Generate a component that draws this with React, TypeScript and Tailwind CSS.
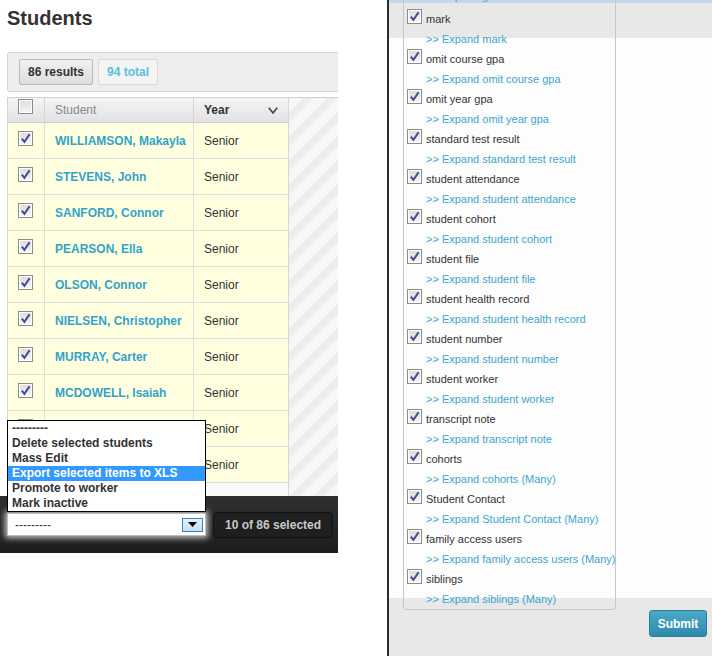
// Students list with bulk-action menu, next to an export field picker
const students = [
  'WILLIAMSON, Makayla',
  'STEVENS, John',
  'SANFORD, Connor',
  'PEARSON, Ella',
  'OLSON, Connor',
  'NIELSEN, Christopher',
  'MURRAY, Carter',
  'MCDOWELL, Isaiah',
  'LYONS, Lily',
  'KRAMER, Owen',
];

const actions = [
  '---------',
  'Delete selected students',
  'Mass Edit',
  'Export selected items to XLS',
  'Promote to worker',
  'Mark inactive',
];

const fields = [
  { label: 'mark', expand: '>> Expand mark' },
  { label: 'omit course gpa', expand: '>> Expand omit course gpa' },
  { label: 'omit year gpa', expand: '>> Expand omit year gpa' },
  { label: 'standard test result', expand: '>> Expand standard test result' },
  { label: 'student attendance', expand: '>> Expand student attendance' },
  { label: 'student cohort', expand: '>> Expand student cohort' },
  { label: 'student file', expand: '>> Expand student file' },
  { label: 'student health record', expand: '>> Expand student health record' },
  { label: 'student number', expand: '>> Expand student number' },
  { label: 'student worker', expand: '>> Expand student worker' },
  { label: 'transcript note', expand: '>> Expand transcript note' },
  { label: 'cohorts', expand: '>> Expand cohorts (Many)' },
  { label: 'Student Contact', expand: '>> Expand Student Contact (Many)' },
  { label: 'family access users', expand: '>> Expand family access users (Many)' },
  { label: 'siblings', expand: '>> Expand siblings (Many)' },
];

const Check = ({ checked }: { checked: boolean }) => (
  <span className="flex h-[15px] w-[15px] shrink-0 items-center justify-center border border-[#8c8c8c] bg-[linear-gradient(#dcdcdc,#f7f7f7)] shadow-[inset_0_0_0_1px_#ffffff]">
    {checked && (
      <svg width="11" height="11" viewBox="0 0 11 11">
        <path d="M1.8 5.6 L4.4 8.8 L9.6 1.2" fill="none" stroke="#3b4c8e" strokeWidth="2" />
      </svg>
    )}
  </span>
);

const StudentsPanel = () => (
  <div className="relative flex w-[338px] shrink-0 flex-col overflow-hidden">
    <h1 className="pl-[7px] pt-[7px] text-[20px] font-bold leading-[23px] text-[#333]">Students</h1>

    <div className="ml-[7px] mt-[22px] flex h-[40px] w-[360px] shrink-0 gap-[5px] rounded-[3px] border border-[#d4d4d4] bg-[#eeeeee] pl-[11px] pt-[6px]">
      <span className="flex h-[26px] items-center rounded-[2px] border border-[#b9b9b9] bg-[linear-gradient(#f0f0f0,#dedede)] px-[8px] font-bold text-[#333]">
        86 results
      </span>
      <span className="flex h-[26px] items-center rounded-[2px] border border-[#dadada] bg-[#f4f4f4] px-[8px] font-bold text-[#5bc0de]">
        94 total
      </span>
    </div>

    <div className="ml-[7px] mt-[5px] flex h-[399px] shrink-0 border-t border-[#d0d0d0]">
      <div className="flex w-[282px] shrink-0 flex-col border-x border-[#d6d6d6] bg-[#fafafa]">
        <div className="flex h-[25px] shrink-0 border-b border-[#d0d0d0] bg-[linear-gradient(#f5f5f5,#e2e2e2)]">
          <div className="w-[37px] border-r border-[#d6d6d6] pl-[10px] pt-[1px]">
            <Check checked={false} />
          </div>
          <div className="flex w-[149px] items-center border-r border-[#d6d6d6] pl-[10px] text-[#888]">Student</div>
          <div className="flex flex-1 items-center justify-between pl-[10px] pr-[10px] font-bold text-[#333]">
            Year
            <svg width="10" height="7" viewBox="0 0 10 7">
              <path d="M0.8 0.8 L5 6 L9.2 0.8" fill="none" stroke="#444" strokeWidth="1.6" />
            </svg>
          </div>
        </div>
        {students.map((name) => (
          <div key={name} className="flex h-[36px] shrink-0 border-b border-[#dedede] bg-[#ffffdf]">
            <div className="w-[37px] border-r border-[#dedede] pl-[10px] pt-[8px]">
              <Check checked />
            </div>
            <div className="flex w-[149px] items-center border-r border-[#dedede] pl-[10px] pt-[1px] font-bold text-[#32a3cc]">
              {name}
            </div>
            <div className="flex flex-1 items-center pl-[10px] pt-[1px] text-[#333]">Senior</div>
          </div>
        ))}
      </div>
      <div className="flex-1 bg-[repeating-linear-gradient(135deg,#f7f7f7_0px,#f7f7f7_10px,#ededed_10px,#ededed_17px)]" />
    </div>

    <div className="flex h-[57px] shrink-0 items-center gap-[7px] bg-[linear-gradient(#303030,#1d1d1d)] pl-[7px]">
      <div className="flex h-[23px] w-[199px] shrink-0 items-center border border-[#bdbdbd] bg-white pl-[7px] text-[#333] shadow-[0_0_6px_2px_rgba(255,255,255,0.75)]">
        ---------
        <span className="ml-auto mr-[2px] flex h-[14px] w-[21px] items-center justify-center border border-[#3c7fb1] bg-[linear-gradient(#e5f1fb,#c4dff3)]">
          <svg width="9" height="5" viewBox="0 0 9 5">
            <path d="M0 0 H9 L4.5 5 Z" fill="#000" />
          </svg>
        </span>
      </div>
      <span className="flex h-[26px] shrink-0 items-center whitespace-nowrap rounded-[4px] border border-[#111] bg-[#1f1f1f] px-[11px] font-bold text-[#c8c8c8]">
        10 of 86 selected
      </span>
    </div>

    <div className="absolute left-[7px] top-[420px] w-[199px] border border-black bg-white text-[12px] font-bold leading-[15px] text-[#333]">
      {actions.map((a) => (
        <div
          key={a}
          className={a === 'Export selected items to XLS' ? 'h-[15px] bg-[#3399ff] pl-[4px] text-white' : 'h-[15px] pl-[4px]'}
        >
          {a}
        </div>
      ))}
    </div>
  </div>
);

const FieldsPanel = () => (
  <div className="flex flex-1 flex-col overflow-hidden bg-[linear-gradient(to_bottom,#c5d7ec_0px,#c5d7ec_3px,#e8e8e8_3px,#e8e8e8_38px,#fdfdfd_38px,#fdfdfd_598px,#e8e8e8_598px)]">
    <div className="-mt-[10px] ml-[14px] w-[213px] rounded-b-[4px] border-x border-b border-[#c6c6c6] text-[11px]">
      <div className="h-[19px] overflow-hidden whitespace-nowrap pl-[22px] leading-[12px] text-[#3aa6cf]">
        &gt;&gt; Expand grade level
      </div>
      {fields.map((f) => (
        <div key={f.label}>
          <div className="flex h-[21px] items-start gap-[4px] pl-[3px]">
            <Check checked />
            <span className="leading-[21px] text-[#333]">{f.label}</span>
          </div>
          <div className="h-[19px] whitespace-nowrap pl-[22px] leading-[19px] text-[#3aa6cf]">{f.expand}</div>
        </div>
      ))}
    </div>
    <div className="flex justify-end pr-[5px]">
      <button className="h-[27px] w-[58px] rounded-[3px] border border-[#2a7d9b] bg-[linear-gradient(#4aa9c7,#2f8aab)] text-[12px] font-bold text-white">
        Submit
      </button>
    </div>
  </div>
);

export default function App() {
  return (
    <div className="flex h-[656px] w-[712px] overflow-hidden bg-white font-['Liberation_Sans',Arial,sans-serif] text-[12px] text-[#333]">
      <StudentsPanel />
      <div className="w-[49px] shrink-0" />
      <div className="w-[2px] shrink-0 bg-[#2b2b2b]" />
      <FieldsPanel />
    </div>
  );
}
